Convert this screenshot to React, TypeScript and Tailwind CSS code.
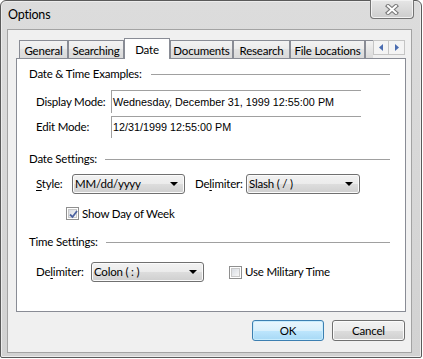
import React from "react";

const btnGrad =
  "bg-[linear-gradient(to_bottom,#f2f2f2_0%,#ebebeb_50%,#dddddd_50%,#cfcfcf_100%)]";

function Combo({ text, w }: { text: string; w: string }) {
  return (
    <div
      className={`${w} shrink-0 h-[20px] rounded-[3px] border border-[#707070] ${btnGrad} shadow-[inset_0_0_0_1px_#fbfbfb] flex items-center justify-between pl-[2px] pr-[6px]`}
    >
      <span className="leading-none whitespace-nowrap">{text}</span>
      <svg width="8" height="4" viewBox="0 0 8 4">
        <path d="M0 0 H8 L4 4 Z" fill="#000" />
      </svg>
    </div>
  );
}

function Check({ checked }: { checked?: boolean }) {
  return (
    <div className="w-[13px] h-[13px] shrink-0 border border-[#8f8f8f] bg-white p-[1px]">
      <div className="w-full h-full border border-[#c9c9c9] bg-[linear-gradient(135deg,#d8dce3,#f7f7f7)] relative">
        {checked && (
          <svg
            className="absolute left-[0px] top-[0px]"
            width="9"
            height="9"
            viewBox="0 0 9 9"
          >
            <path
              d="M1 4.5 L3.5 7 L8 1"
              fill="none"
              stroke="#4c62a0"
              strokeWidth="1.8"
            />
          </svg>
        )}
      </div>
    </div>
  );
}

function Header({ text, gap }: { text: string; gap: string }) {
  return (
    <div className="h-[16px] flex items-center pl-[12px] pr-[15px]">
      <span className="whitespace-nowrap">{text}</span>
      <div className={`flex-1 h-px bg-[#a0a0a0] ${gap}`} />
    </div>
  );
}

function Tab({
  label,
  w,
  selected,
}: {
  label: string;
  w: string;
  selected?: boolean;
}) {
  if (selected)
    return (
      <div
        className={`${w} shrink-0 h-[21px] mb-[-1px] relative z-10 bg-white border border-b-0 border-[#898c95] flex items-start justify-center pt-[2px]`}
      >
        {label}
      </div>
    );
  return (
    <div
      className={`${w} shrink-0 h-[18px] border border-b-0 border-[#898c95] bg-[linear-gradient(to_bottom,#f2f2f2_0%,#ebebeb_50%,#e2e2e2_50%,#dadada_100%)] flex items-center justify-center pt-[2px] whitespace-nowrap overflow-hidden`}
    >
      {label}
    </div>
  );
}

export default function App() {
  return (
    <div className="w-[423px] h-[359px] bg-white font-['Lato',sans-serif] text-[11.5px] tracking-[-0.2px] text-black">
      <div className="w-[422px] h-[358px] rounded-t-[6px] rounded-b-[2px] border border-[#5a5a5a] bg-[linear-gradient(to_bottom,#dcdcdc,#d2d2d2)] shadow-[inset_0_0_0_1px_#ececec] flex flex-col pl-[6px] pr-[9px] pb-[4px]">
        {/* Title bar */}
        <div className="h-[28px] relative flex items-center pl-[1px]">
          <span className="text-[12.5px] pt-[1px]">Options</span>
          <div className="absolute top-[-1px] right-[-2px] w-[44px] h-[19px] rounded-b-[4px] border border-t-0 border-[#737373] bg-[linear-gradient(to_bottom,#e6e6e6,#cdcdcd)] shadow-[inset_0_0_0_1px_#f2f2f2] flex items-center justify-center">
            <svg width="14" height="11" viewBox="0 0 14 11">
              <path
                d="M3 2 L11 9 M11 2 L3 9"
                stroke="#7a7a7a"
                strokeWidth="4.2"
                strokeLinecap="square"
              />
              <path
                d="M3 2 L11 9 M11 2 L3 9"
                stroke="#ffffff"
                strokeWidth="2"
                strokeLinecap="square"
              />
            </svg>
          </div>
        </div>

        {/* Client area */}
        <div className="flex-1 bg-[#f0f0f0] border border-[#a3a3a3] pl-[8px] pr-[5px] pt-[8px] flex flex-col">
          {/* Tabs */}
          <div className="h-[20px] relative flex items-end pl-[3px]">
            <Tab label="General" w="w-[49px]" />
            <Tab label="Searching" w="w-[56px]" />
            <Tab label="Date" w="w-[46px]" selected />
            <Tab label="Documents" w="w-[63px]" />
            <Tab label="Research" w="w-[57px]" />
            <Tab label="File Locations" w="w-[75px]" />
            <div className="w-[8px] shrink-0 h-[18px] border border-b-0 border-r-0 border-[#898c95] bg-[linear-gradient(to_bottom,#f2f2f2,#dadada)]" />
            <div className="absolute right-[1px] top-[2px] flex">
              <div className="w-[16px] h-[15px] border border-[#c5c5c5] bg-[#f4f4f4] flex items-center justify-center">
                <svg width="4" height="7" viewBox="0 0 4 7">
                  <path d="M4 0 V7 L0 3.5 Z" fill="#4a6cb0" />
                </svg>
              </div>
              <div className="w-[16px] h-[15px] border border-l-0 border-[#c5c5c5] bg-[#f4f4f4] flex items-center justify-center">
                <svg width="4" height="7" viewBox="0 0 4 7">
                  <path d="M0 0 V7 L4 3.5 Z" fill="#4a6cb0" />
                </svg>
              </div>
            </div>
          </div>

          {/* Panel */}
          <div className="h-[254px] bg-white border border-[#898c95] flex flex-col">
            <div className="mt-[7px]">
              <Header text="Date & Time Examples:" gap="ml-[9px]" />
            </div>
            <div className="mt-[8px] h-[23px] flex items-stretch pl-[19px]">
              <div className="w-[75px] shrink-0 flex items-center whitespace-nowrap">Display Mode:</div>
              <div className="w-[250px] shrink-0 border-t border-l border-[#a0a0a0] flex items-center pl-[1px] font-['Liberation_Sans',sans-serif] text-[10.8px] tracking-normal whitespace-nowrap">
                Wednesday, December 31, 1999 12:55:00 PM
              </div>
            </div>
            <div className="mt-[3px] h-[22px] flex items-stretch pl-[19px]">
              <div className="w-[75px] shrink-0 flex items-center whitespace-nowrap">Edit Mode:</div>
              <div className="w-[250px] shrink-0 border-t border-l border-[#a0a0a0] flex items-center pl-[1px] font-['Liberation_Sans',sans-serif] text-[10.8px] tracking-normal whitespace-nowrap">
                12/31/1999 12:55:00 PM
              </div>
            </div>

            <div className="mt-[13px]">
              <Header text="Date Settings:" gap="ml-[8px]" />
            </div>
            <div className="mt-[7px] h-[20px] flex items-center pl-[19px]">
              <div className="w-[36px] shrink-0 whitespace-nowrap">
                <span className="underline underline-offset-2">S</span>tyle:
              </div>
              <Combo text="MM/dd/yyyy" w="w-[113px]" />
              <div className="w-[51px] shrink-0 ml-[10px] whitespace-nowrap">
                De<span className="underline underline-offset-2">l</span>imiter:
              </div>
              <Combo text="Slash ( / )" w="w-[114px]" />
            </div>
            <div className="mt-[13px] h-[13px] flex items-center pl-[49px]">
              <Check checked />
              <span className="ml-[3px] whitespace-nowrap">Show Day of Week</span>
            </div>

            <div className="mt-[14px]">
              <Header text="Time Settings:" gap="ml-[8px]" />
            </div>
            <div className="mt-[12px] h-[20px] flex items-center pl-[19px]">
              <div className="w-[55px] shrink-0 whitespace-nowrap">
                De<span className="underline underline-offset-2">l</span>imiter:
              </div>
              <Combo text="Colon ( : )" w="w-[113px]" />
              <div className="ml-[25px]">
                <Check />
              </div>
              <span className="ml-[3px] whitespace-nowrap">Use Military Time</span>
            </div>
          </div>

          {/* Buttons */}
          <div className="mt-[8px] flex justify-end gap-[8px] pr-[1px]">
            <div className="w-[72px] h-[21px] rounded-[3px] border border-[#3c7fb1] bg-[linear-gradient(to_bottom,#eaf6fd_0%,#d9f0fc_50%,#bee6fd_50%,#a7d9f5_100%)] shadow-[inset_0_0_0_1px_#c8ecfd] flex items-center justify-center">
              OK
            </div>
            <div
              className={`w-[73px] h-[21px] rounded-[3px] border border-[#707070] ${btnGrad} shadow-[inset_0_0_0_1px_#fbfbfb] flex items-center justify-center`}
            >
              Cancel
            </div>
          </div>
        </div>
      </div>
    </div>
  );
}
